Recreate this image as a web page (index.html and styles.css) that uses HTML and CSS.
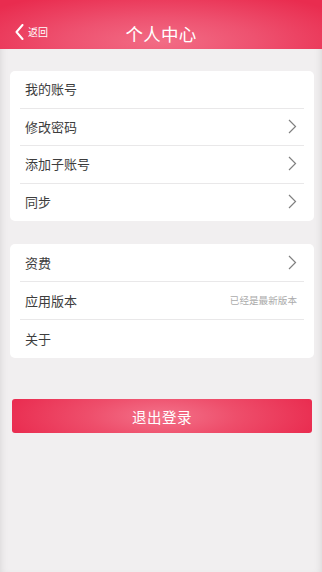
FILE: index.html
```html
<!DOCTYPE html>
<html lang="zh">
<head>
<meta charset="utf-8">
<title>个人中心</title>
<link rel="stylesheet" href="styles.css">
</head>
<body>
<header class="topbar">
  <div class="back">
    <svg class="back-icon" width="9" height="16" viewBox="0 0 9 16"><polyline points="7.5,1 1.5,8 7.5,15" fill="none" stroke="#fff" stroke-width="2" stroke-linecap="round" stroke-linejoin="round"/></svg>
    <span class="back-text">返回</span>
  </div>
  <h1 class="title">个人中心</h1>
</header>
<main class="content">
  <section class="card card-a">
    <div class="row"><span class="label">我的账号</span></div>
    <div class="row"><span class="label">修改密码</span><svg class="chev" width="9" height="15" viewBox="0 0 9 15"><polyline points="1,1 7.5,7.5 1,14" fill="none" stroke="#808080" stroke-width="1.2"/></svg></div>
    <div class="row"><span class="label">添加子账号</span><svg class="chev" width="9" height="15" viewBox="0 0 9 15"><polyline points="1,1 7.5,7.5 1,14" fill="none" stroke="#808080" stroke-width="1.2"/></svg></div>
    <div class="row"><span class="label">同步</span><svg class="chev" width="9" height="15" viewBox="0 0 9 15"><polyline points="1,1 7.5,7.5 1,14" fill="none" stroke="#808080" stroke-width="1.2"/></svg></div>
  </section>
  <section class="card card-b">
    <div class="row"><span class="label">资费</span><svg class="chev" width="9" height="15" viewBox="0 0 9 15"><polyline points="1,1 7.5,7.5 1,14" fill="none" stroke="#808080" stroke-width="1.2"/></svg></div>
    <div class="row"><span class="label">应用版本</span><span class="note">已经是最新版本</span></div>
    <div class="row"><span class="label">关于</span></div>
  </section>
  <button class="logout">退出登录</button>
</main>
</body>
</html>
```
FILE: styles.css
```css
* { box-sizing: border-box; }
html, body { margin: 0; padding: 0; }
body {
  width: 322px;
  height: 572px;
  overflow: hidden;
  background: #f1eff0;
  font-family: "Noto Sans CJK SC", "Noto Sans", sans-serif;
  color: #3a3a3a;
  box-shadow: inset 6px 0 8px -6px rgba(0,0,0,0.12), inset -6px 0 8px -6px rgba(0,0,0,0.12);
}
.topbar {
  height: 49px;
  padding-top: 18px;
  display: flex;
  align-items: center;
  justify-content: center;
  position: relative;
  background: radial-gradient(ellipse 65% 110% at 50% 85%, #f26c85 0%, #ee5270 45%, #e92c4f 100%);
  color: #fff;
}
.back {
  position: absolute;
  left: 15px;
  top: 24px;
  display: flex;
  align-items: center;
  gap: 4px;
}
.back-icon { display: block; }
.back-text { font-size: 10px; line-height: 16px; }
.title {
  margin: 0;
  font-size: 17.5px;
  font-weight: 400;
  line-height: 30px;
  letter-spacing: 0.3px;
}
.content {
  padding: 22px 8px 0 10px;
}
.card {
  background: #fff;
  border-radius: 5px;
}
.card-b { margin-top: 23px; }
.row {
  margin: 0 10px;
  padding: 0 7px 1px 5px;
  display: flex;
  align-items: center;
  justify-content: space-between;
  border-bottom: 1px solid #e9e8e9;
}
.card-a .row { height: 37.5px; }
.card-b .row { height: 38px; }
.row:last-child { border-bottom: none; }
.label { font-size: 13px; color: #3d3d3d; }
.note { font-size: 9.6px; color: #ababab; }
.chev { display: block; }
.logout {
  display: block;
  margin: 41px 0 0 2px;
  width: 300px;
  height: 34px;
  border: none;
  border-radius: 3px;
  background: radial-gradient(ellipse 55% 140% at 50% 50%, #f3728a 0%, #ee4e6b 45%, #e92a4e 100%);
  color: #fff;
  font-family: "Noto Sans CJK SC", "Noto Sans", sans-serif;
  font-size: 14.5px;
  letter-spacing: 0.5px;
  padding: 0;
}
```
